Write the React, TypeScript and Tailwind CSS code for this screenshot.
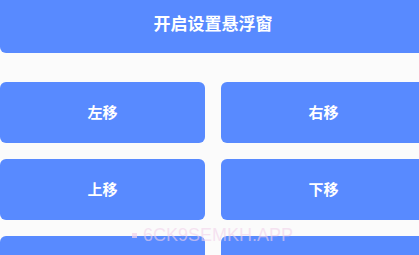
import React from "react";

const Btn = ({ label, className = "" }: { label: string; className?: string }) => (
  <button
    className={`h-[61px] rounded-[6px] bg-[#588AFF] text-white font-semibold flex items-center justify-center ${className}`}
  >
    {label}
  </button>
);

export default function App() {
  return (
    <div
      className="relative w-[419px] h-[255px] overflow-hidden bg-[#FBFBFB]"
      style={{ fontFamily: '"Noto Sans CJK SC", "Noto Sans", sans-serif' }}
    >
      <div className="w-[426px] -mt-[8px] flex flex-col">
        <Btn label="开启设置悬浮窗" className="w-full text-[17px]" />
        <div className="mt-[29px] grid grid-cols-2 gap-x-[16px] gap-y-[16px]">
          <Btn label="左移" className="text-[15px]" />
          <Btn label="右移" className="text-[15px]" />
          <Btn label="上移" className="text-[15px]" />
          <Btn label="下移" className="text-[15px]" />
          <Btn label="" />
          <Btn label="" />
        </div>
      </div>
      {/* watermark */}
      <div
        className="absolute left-[132px] top-[222px] flex items-center gap-[6px] text-[18px] text-[#F2D2EA]/60 pointer-events-none"
        style={{ fontFamily: '"Liberation Sans", Arial, sans-serif' }}
      >
        <span className="w-[5px] h-[5px] bg-[#F2D2EA]/70 inline-block" />
        <span>6CK9SEMKH.APP</span>
      </div>
    </div>
  );
}
